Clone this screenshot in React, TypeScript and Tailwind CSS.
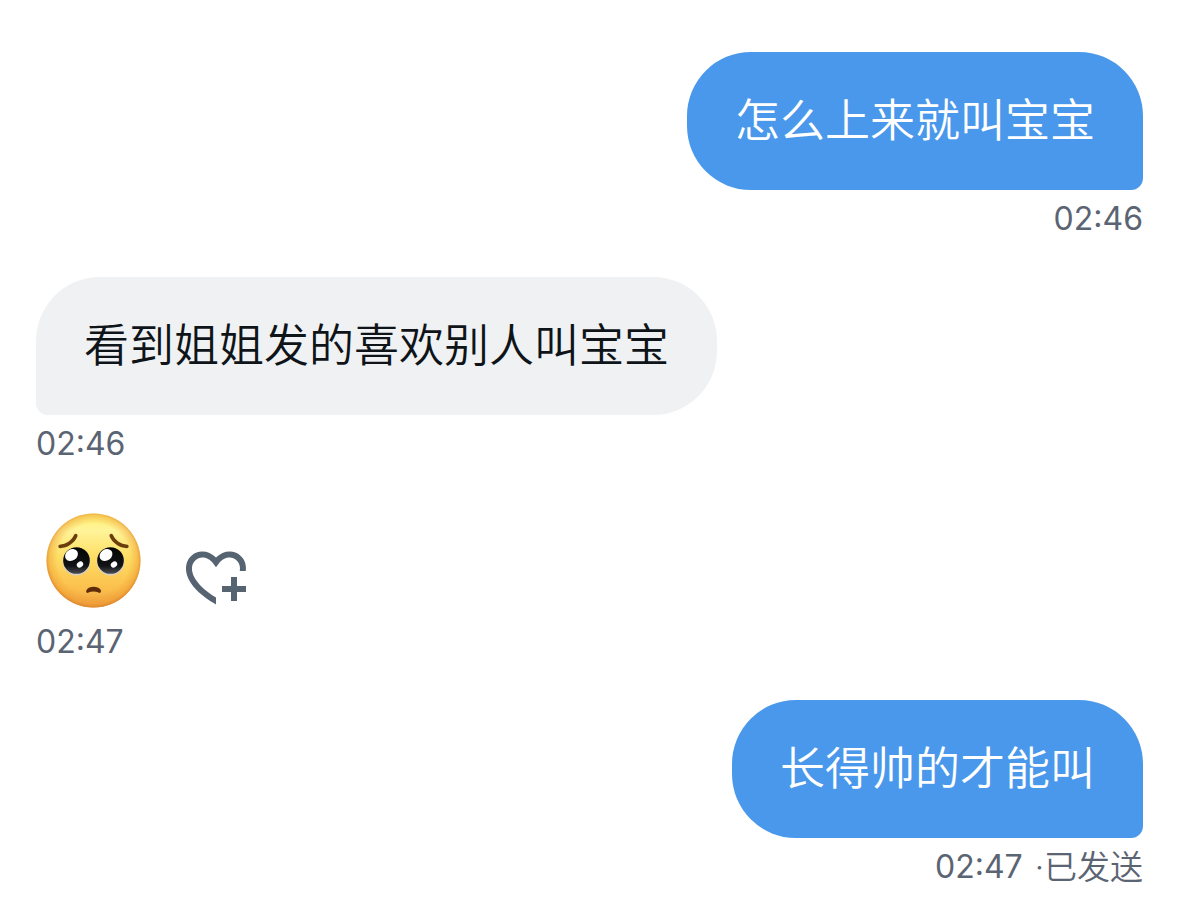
import clsx from "clsx";
import type { ReactNode } from "react";

type Message = {
  id: number;
  mine: boolean;
  text?: string;
  time: string;
  status?: string;
};

const messages: Message[] = [
  { id: 1, mine: true, text: "怎么上来就叫宝宝", time: "02:46" },
  { id: 2, mine: false, text: "看到姐姐发的喜欢别人叫宝宝", time: "02:46" },
  { id: 3, mine: false, time: "02:47" },
  { id: 4, mine: true, text: "长得帅的才能叫", time: "02:47", status: "已发送" },
];

function PleadingFace() {
  return (
    <svg viewBox="0 0 95 95" className="size-[95px]" role="img" aria-label="🥺">
      <defs>
        <linearGradient id="face" x1="0" y1="0" x2="0" y2="1">
          <stop offset="0" stopColor="#fdf06f" />
          <stop offset="0.18" stopColor="#fff49a" />
          <stop offset="0.45" stopColor="#fddf66" />
          <stop offset="0.8" stopColor="#fbbf4c" />
          <stop offset="1" stopColor="#ee9f42" />
        </linearGradient>
        <radialGradient id="edge" cx="0.5" cy="0.49" r="0.51">
          <stop offset="0.75" stopColor="#f09a2c" stopOpacity="0" />
          <stop offset="0.92" stopColor="#ee982e" stopOpacity="0.45" />
          <stop offset="1" stopColor="#d9812c" stopOpacity="0.85" />
        </radialGradient>
        <linearGradient id="eye" x1="0" y1="0" x2="0" y2="1">
          <stop offset="0" stopColor="#050505" />
          <stop offset="0.7" stopColor="#111215" />
          <stop offset="1" stopColor="#4b4d52" />
        </linearGradient>
      </defs>
      <circle cx="47.5" cy="47.5" r="47" fill="url(#face)" />
      <circle cx="47.5" cy="47.5" r="47" fill="url(#edge)" />
      {/* brows */}
      <g fill="#6b3c0c">
        <path d="M13.5 31.7C20.5 31 25.5 27.5 28 22C29.4 19.6 32.2 21.2 31.4 23.6C28.4 30.4 21.5 35 14.2 35.2C12 35.200 11.8 31.9 13.5 31.7Z" />
        <path d="M81.5 31.7C74.5 31 69.5 27.5 67 22C65.6 19.6 62.8 21.2 63.6 23.6C66.6 30.4 73.5 35 80.8 35.2C83 35.2 83.2 31.9 81.5 31.7Z" />
      </g>
      {/* eyes */}
      <circle cx="30.5" cy="49" r="13.6" fill="#d9cfc4" />
      <circle cx="64.5" cy="49" r="13.6" fill="#d9cfc4" />
      <circle cx="30.5" cy="47.5" r="13.3" fill="url(#eye)" />
      <circle cx="64.5" cy="47.5" r="13.3" fill="url(#eye)" />
      <g fill="#fff">
        <ellipse cx="25.5" cy="42" rx="6.8" ry="5.6" transform="rotate(-35 25.5 42)" />
        <ellipse cx="60" cy="42" rx="6.8" ry="5.6" transform="rotate(-35 60 42)" />
        <ellipse cx="34" cy="51.5" rx="3.4" ry="2.8" transform="rotate(-35 34 51.5)" />
        <ellipse cx="68" cy="51.5" rx="3.4" ry="2.8" transform="rotate(-35 68 51.5)" />
      </g>
      {/* mouth */}
      <path
        d="M40.5 77C42 74.8 44.5 73.8 47.5 73.8C50.5 73.8 53.5 74.8 54.8 77C55.5 79.3 54 80.5 52.5 79.6C49.5 78.1 45.5 78.1 42.5 79.6C41 80.5 39.5 79.3 40.5 77Z"
        fill="#5f2c0b"
      />
    </svg>
  );
}

function HeartPlus() {
  return (
    <svg viewBox="0 0 24 24" className="size-[72px]" fill="currentColor" aria-hidden="true">
      <path d="M17 12v3h-2.998v2h3v3h2v-3h3v-2h-3.001v-3H17zm-5 6.839c-3.871-2.34-6.053-4.639-7.127-6.609-1.112-2.04-1.031-3.7-.479-4.82.561-1.13 1.667-1.84 2.91-1.91 1.222-.06 2.68.51 3.892 2.16l.806 1.09.805-1.09c1.211-1.65 2.668-2.22 3.89-2.16 1.242.07 2.347.78 2.908 1.91.334.677.49 1.554.321 2.59h2.011c.153-1.283-.039-2.469-.539-3.48-.887-1.79-2.647-2.91-4.601-3.01-1.65-.09-3.367.56-4.796 2.01-1.43-1.45-3.147-2.1-4.798-2.01-1.954.1-3.714 1.22-4.601 3.01-.896 1.81-.846 4.17.514 6.67 1.353 2.48 4.003 5.12 8.382 7.67l.502.299v-2.32z" />
    </svg>
  );
}

function Bubble({ mine, children }: { mine: boolean; children: ReactNode }) {
  return (
    <p
      className={clsx(
        "rounded-[64px] px-12 pt-[39px] pb-[39px] text-[45px] leading-[60px] font-[350]",
        mine ? "rounded-br-xl bg-[#4a98eb] text-white" : "rounded-bl-xl bg-[#eff1f3] text-[#0f1419]"
      )}
    >
      {children}
    </p>
  );
}

export default function App() {
  return (
    <main className="min-h-screen bg-white px-9 pt-13 font-['Inter','Noto_Sans_CJK_SC',sans-serif]">
      <ul className="flex flex-col gap-[37px]">
        {messages.map((m) => (
          <li key={m.id} className={clsx("flex flex-col", m.mine ? "items-end" : "items-start")}>
            {m.text ? (
              <Bubble mine={m.mine}>{m.text}</Bubble>
            ) : (
              <div className="flex items-end gap-[39px] pl-[10px]">
                <div className="pt-[11px] pb-[5px]">
                  <PleadingFace />
                </div>
                <button type="button" aria-label="添加回应" className="text-[#566370]">
                  <HeartPlus />
                </button>
              </div>
            )}
            <div className="mt-2 flex items-center gap-3 leading-[42px] text-[#5b6472]">
              <time className="text-[32px]">{m.time}</time>
              {m.status && <span className="text-[33px] font-[350]">·{m.status}</span>}
            </div>
          </li>
        ))}
      </ul>
    </main>
  );
}
